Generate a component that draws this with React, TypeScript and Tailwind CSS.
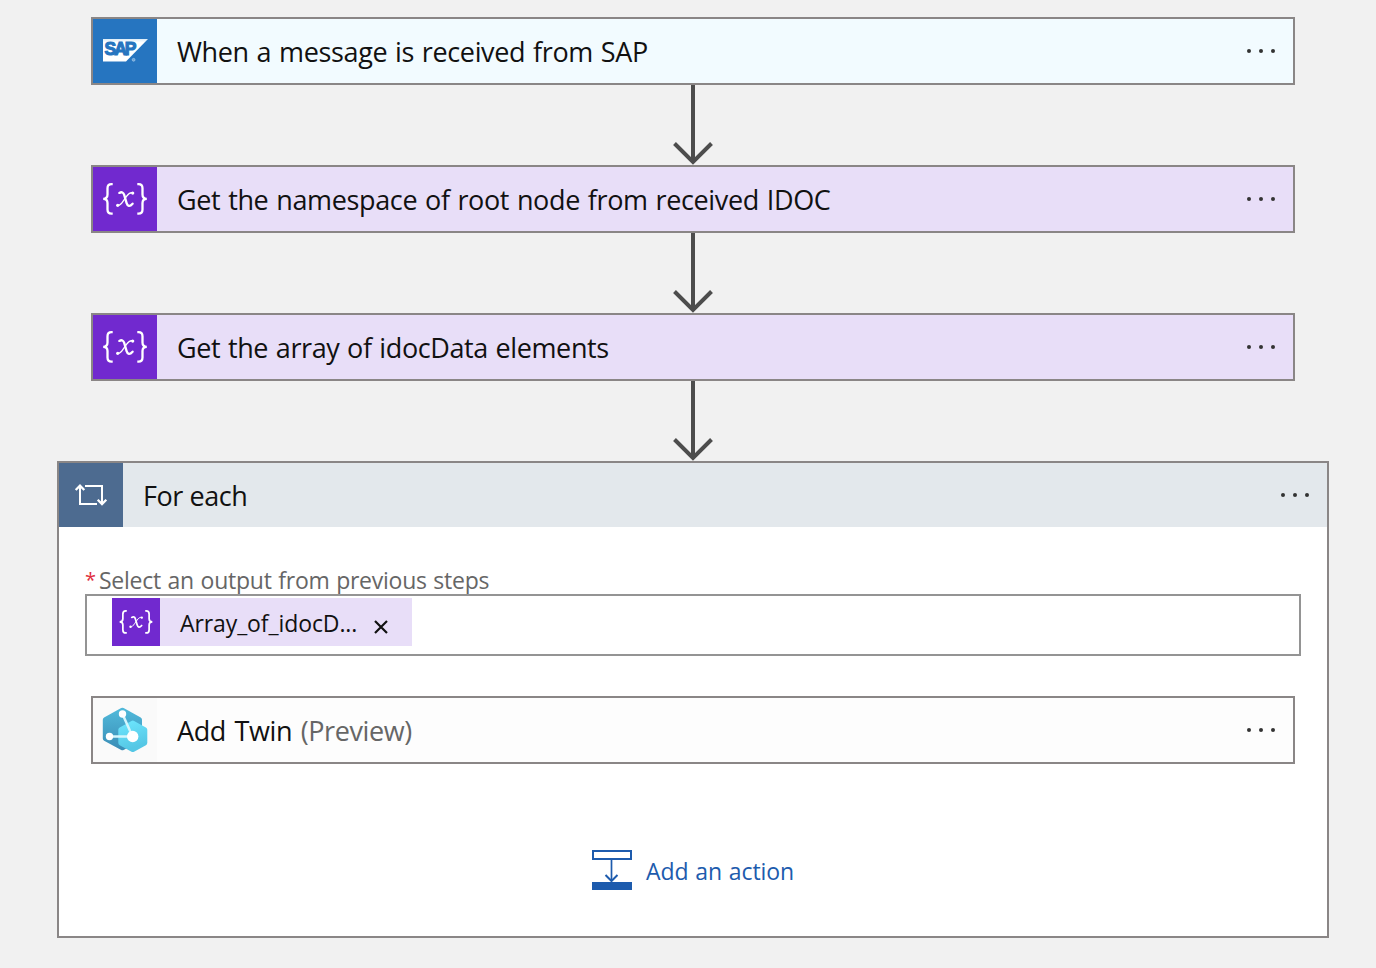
import React from 'react';

const font = "font-['Open_Sans','Noto_Sans',sans-serif]";

function SapLogo() {
  return (
    <svg width="64" height="64" viewBox="0 0 64 64" className="block">
      <defs>
        <linearGradient id="sapFade" x1="0" y1="0" x2="0" y2="1">
          <stop offset="0" stopColor="#dcecf8" />
          <stop offset="0.15" stopColor="#ffffff" />
        </linearGradient>
      </defs>
      <path d="M10 20H55L33 42.5H10Z" fill="url(#sapFade)" />
      <text x="11.500" y="36.400" fontFamily="Liberation Sans, sans-serif" fontWeight="700" fontSize="17.500" letterSpacing="-2" fill="#2675c0" stroke="#2675c0" strokeWidth="1.100">SAP</text>
      <circle cx="40.6" cy="40.8" r="1.4" fill="#6ba3d8" stroke="#a9cbea" strokeWidth="0.7" />
    </svg>
  );
}

function VariableIcon({ size }: { size: number }) {
  return (
    <svg width={size} height={size} viewBox="0 0 64 64" className="block">
      <g fill="none" stroke="#fff" strokeWidth="2.300">
        <path d="M19.700 17.200h-1.200q-4 0-4 4v6.300q0 4.300-4.300 4.300q4.300 0 4.300 4.300v6.400q0 4.100 4 4.100h1.200" />
        <path d="M44.300 17.200h1.200q4 0 4 4v6.300q0 4.300 4.300 4.300q-4.300 0-4.300 4.300v6.400q0 4.100-4 4.100h-1.200" />
      </g>
      <g fill="none" stroke="#fff" strokeLinecap="round">
        <path d="M26.300 25.900c2.500-1.400 4.100-.5 4.900 2l2.400 8.200c.9 3 3 4 6 .6" strokeWidth="2.300" />
        <path d="M39.700 26c-2.300-1-4.300.8-6.200 3.400l-3.500 4.900c-2 2.900-3.500 4.800-5.600 3.900" strokeWidth="1.300" />
      </g>
      <circle cx="39.700" cy="26.100" r="1.600" fill="#fff" />
      <circle cx="24.700" cy="38.300" r="1.600" fill="#fff" />
    </svg>
  );
}

function LoopIcon() {
  return (
    <svg width="64" height="64" viewBox="0 0 64 64" fill="none" stroke="#fff" strokeWidth="2" className="block">
      <path d="M21 23.500V41H38" />
      <path d="M16.700 27l4.300-4.300l4.300 4.300" strokeWidth="2.300" />
      <path d="M26 23H43V40.500" />
      <path d="M38.700 36.700l4.300 4.300l4.300-4.300" strokeWidth="2.300" />
    </svg>
  );
}

function TwinIcon() {
  return (
    <svg width="64" height="64" viewBox="0 0 64 64" className="block">
      <defs>
        <linearGradient id="twinBack" x1="0" y1="0" x2="0" y2="1">
          <stop offset="0" stopColor="#50b8d9" />
          <stop offset="1" stopColor="#3b8fb8" />
        </linearGradient>
        <linearGradient id="twinFront" x1="0" y1="0" x2="0.3" y2="1">
          <stop offset="0" stopColor="#6ce4fc" />
          <stop offset="1" stopColor="#55c7e5" />
        </linearGradient>
      </defs>
      <path d="M29.400 12.200L46.500 21.800V40.500L29.400 49.700L12.300 40.500V21.800Z" fill="url(#twinBack)" stroke="url(#twinBack)" strokeWidth="5" strokeLinejoin="round" />
      <path d="M39.800 25.300L51.600 31.800V44.800L39.800 51.300L28 44.800V31.800Z" fill="url(#twinFront)" stroke="url(#twinFront)" strokeWidth="5.400" strokeLinejoin="round" />
      <path d="M29.500 16L39.500 38.500H16.500" fill="none" stroke="#d4f6fd" strokeWidth="2.500" />
      <circle cx="29.500" cy="16" r="3.700" fill="#fff" />
      <circle cx="16.500" cy="38.500" r="3.700" fill="#fff" />
      <circle cx="39.700" cy="38.500" r="5.700" fill="#fff" />
    </svg>
  );
}

function Dots() {
  return (
    <svg width="30" height="6" viewBox="0 0 30 6" fill="#333" className="mr-[17px] shrink-0">
      <circle cx="3" cy="3" r="2" />
      <circle cx="15" cy="3" r="2" />
      <circle cx="27" cy="3" r="2" />
    </svg>
  );
}

function Arrow() {
  return (
    <svg width="44" height="80" viewBox="0 0 44 80" fill="none" stroke="#4d4d4d" strokeWidth="4" className="block shrink-0 self-center">
      <path d="M22 0V77" />
      <path d="M3.500 58.500L22 77L40.500 58.500" />
    </svg>
  );
}

interface CardProps {
  icon: React.ReactNode;
  iconBg: string;
  bg: string;
  children: React.ReactNode;
}

function Card({ icon, iconBg, bg, children }: CardProps) {
  return (
    <div className={`flex h-[68px] w-[1204px] shrink-0 items-center border-2 border-[#8a8686] ${bg}`}>
      <div className={`size-16 shrink-0 ${iconBg}`}>{icon}</div>
      <div className="flex-1 pt-0.5 pl-5 text-[27px] leading-[36px] tracking-[-0.35px] whitespace-nowrap text-[#111] [word-spacing:1.1px]">{children}</div>
      <Dots />
    </div>
  );
}

export default function App() {
  return (
    <main className={`flex h-[968px] w-[1376px] flex-col overflow-hidden bg-[#f1f1f1] pt-[17px] pl-[57px] ${font}`}>
      <div className="flex w-[1272px] flex-col items-center">
        <Card icon={<SapLogo />} iconBg="bg-[#2675c0]" bg="bg-[#f2fbff]">
          When a message is received from SAP
        </Card>
        <Arrow />
        <Card icon={<VariableIcon size={64} />} iconBg="bg-[#7129cf]" bg="bg-[#e8def8]">
          Get the namespace of root node from received IDOC
        </Card>
        <Arrow />
        <Card icon={<VariableIcon size={64} />} iconBg="bg-[#7129cf]" bg="bg-[#e8def8]">
          <span className="tracking-[-0.4px]">Get the array of idocData elements</span>
        </Card>
        <Arrow />
        <section className="flex h-[477px] w-full flex-col border-2 border-[#8a8686] bg-white">
          <header className="flex h-16 shrink-0 items-center bg-[#e3e8ec]">
            <div className="size-16 bg-[#4d6b90]"><LoopIcon /></div>
            <h2 className="flex-1 pt-0.5 pl-5 text-[27px] leading-[36px] tracking-[-0.45px] text-[#111]">For each</h2>
            <Dots />
          </header>
          <div className="flex flex-col px-[26px] pt-[38px]">
            <label className="flex h-[29px] items-center text-[23px] leading-[30px] whitespace-nowrap text-[#666]">
              <span className="w-[14px] text-[20px] text-[#e0303e]">*</span>
              <span className="pt-px tracking-[-0.25px] [word-spacing:0.9px]">Select an output from previous steps</span>
            </label>
            <div className="flex h-[62px] items-start border-2 border-[#949494] pt-[2px] pl-[25px]">
              <div className="flex h-12 w-[300px] items-center bg-[#e8def8]">
                <div className="size-12 shrink-0 bg-[#7129cf]"><VariableIcon size={48} /></div>
                <div className="w-[214px] pt-0.5 pl-5 text-[23px] leading-[30px] tracking-[-0.1px] whitespace-nowrap text-[#111]">Array_of_idocD...</div>
                <svg width="14" height="14" viewBox="0 0 14 14" stroke="#111" strokeWidth="2.2" className="mt-[10px]">
                  <path d="M1 1L13 13M13 1L1 13" />
                </svg>
              </div>
            </div>
          </div>
          <div className="flex justify-center pt-10">
            <Card icon={<TwinIcon />} iconBg="bg-[#fafafa]" bg="bg-[#fdfdfd]">
              <span className="tracking-[-0.4px] [word-spacing:2px]">Add Twin <span className="text-[#666]">(Preview)</span></span>
            </Card>
          </div>
          <div className="flex items-center pt-[86px] pl-[533px]">
            <svg width="40" height="40" viewBox="0 0 40 40" fill="none" stroke="#1d5bad" strokeWidth="2">
              <path d="M1 1H39V9H1Z" />
              <path d="M19.500 10V31" strokeWidth="1.700" />
              <path d="M13.500 25L19.500 31L25.500 25" />
              <path d="M0 32H40V40H0Z" fill="#1d5bad" stroke="none" />
            </svg>
            <span className="pt-0.5 pl-[14px] text-[23px] leading-[30px] tracking-[-0.1px] whitespace-nowrap text-[#1d5bad] [word-spacing:1px]">Add an action</span>
          </div>
        </section>
      </div>
    </main>
  );
}
